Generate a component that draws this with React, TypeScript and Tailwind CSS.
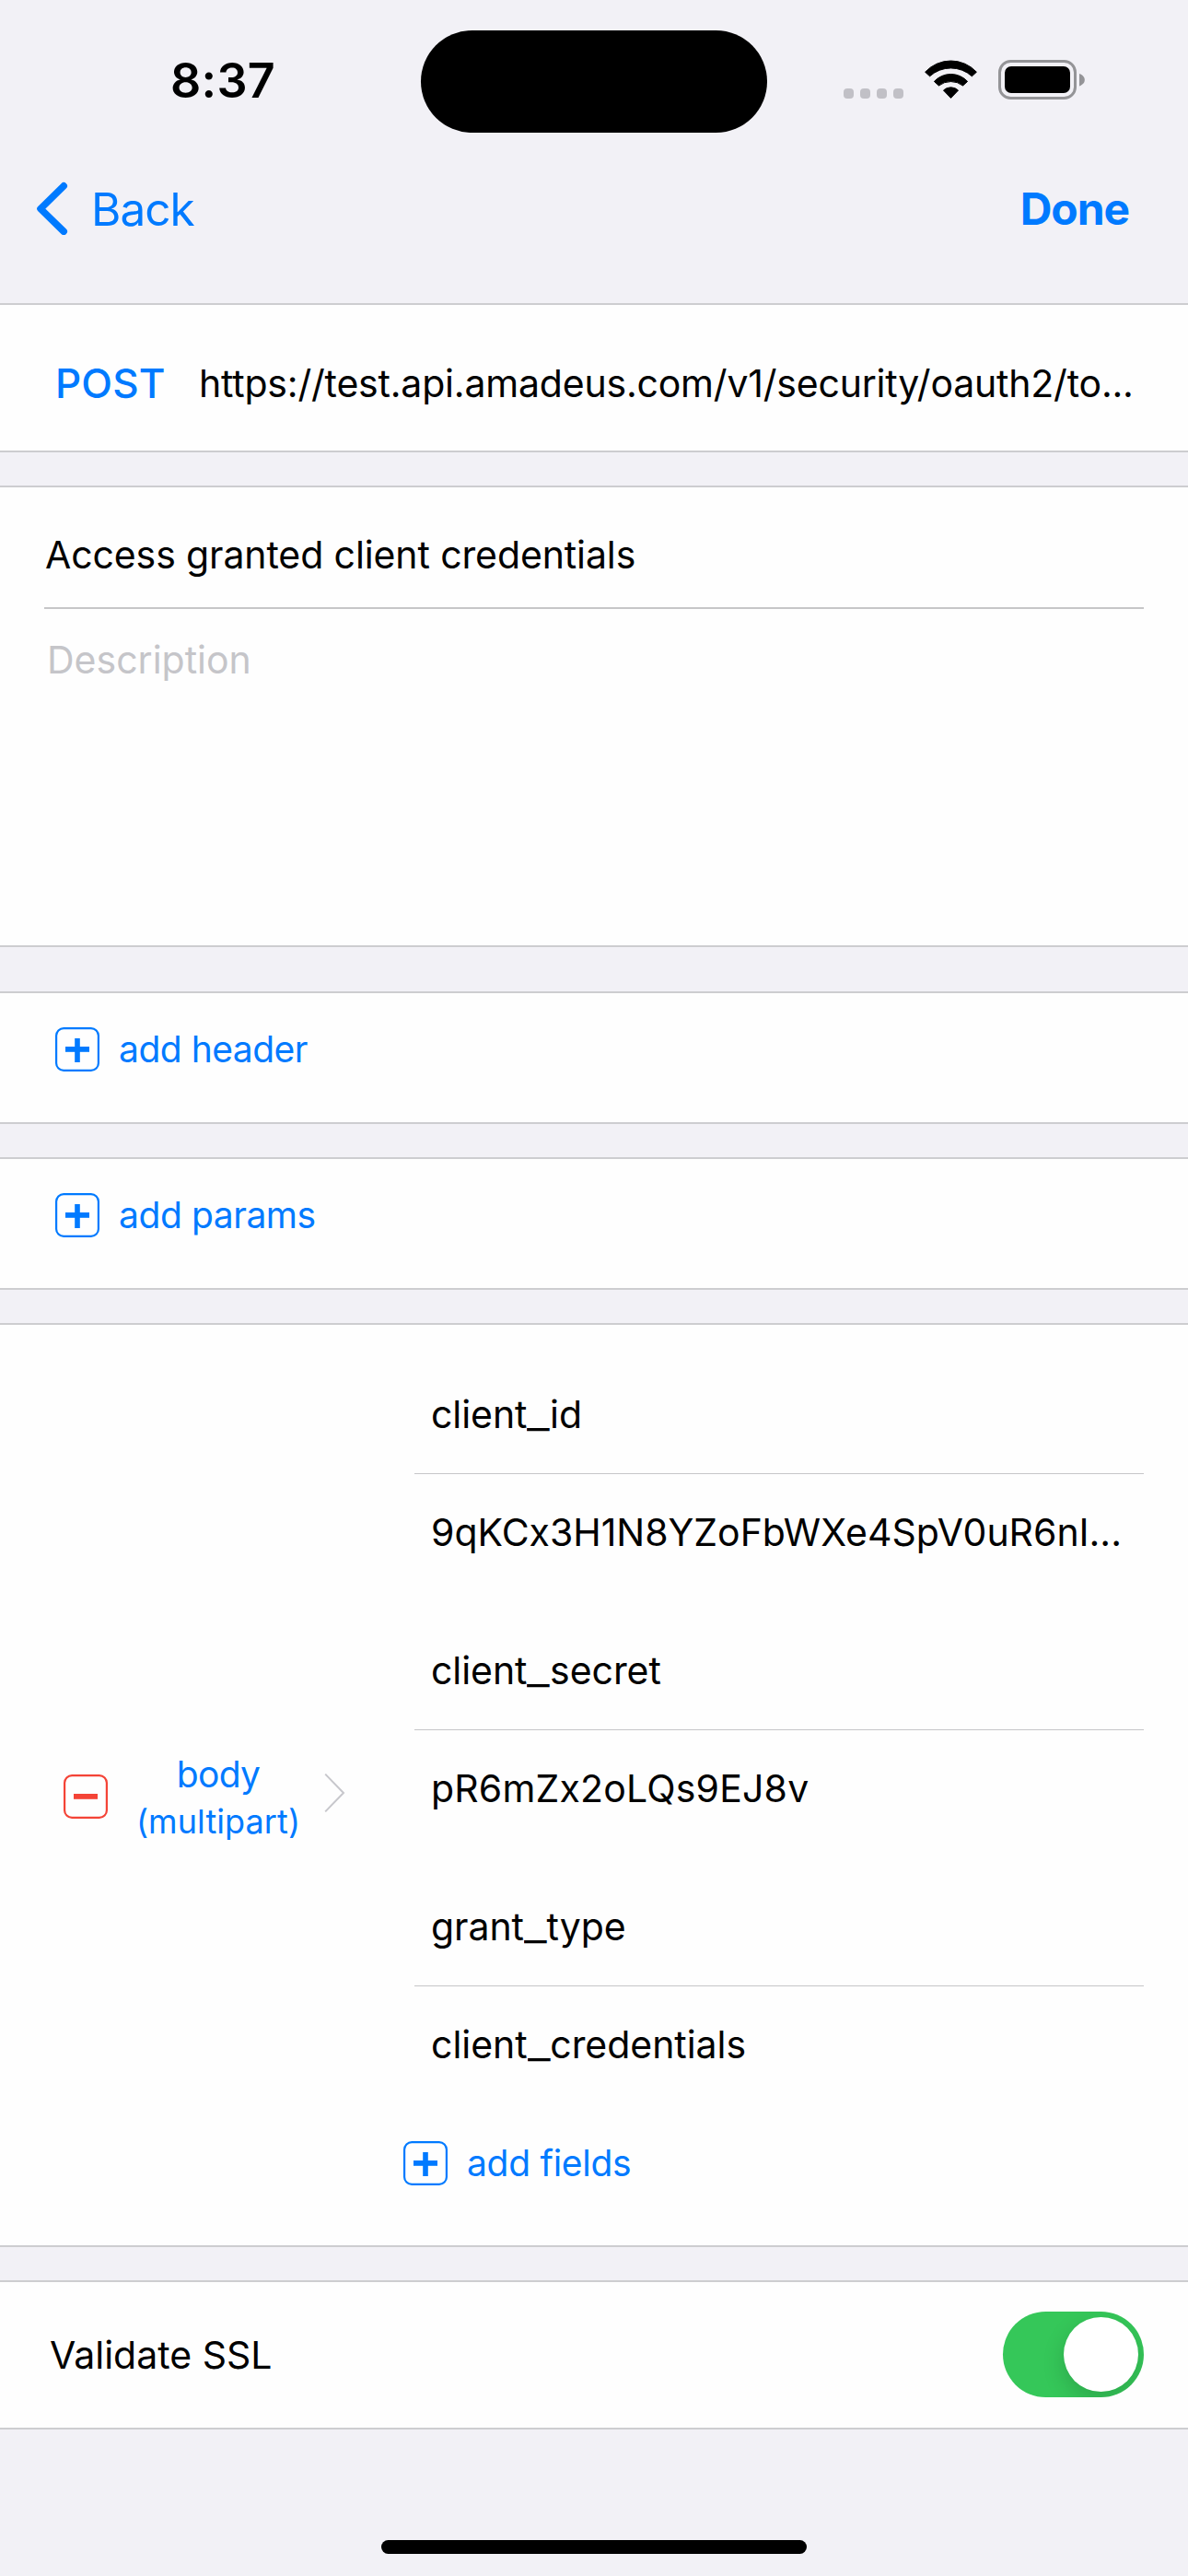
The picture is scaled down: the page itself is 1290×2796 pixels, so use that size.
import { Fragment, type ReactNode } from "react";

function Wifi() {
  return (
    <svg width="59" height="44" viewBox="-1 -1 59 44" className="mt-16 ml-[76px]" fill="#000" stroke="#000" strokeWidth="1" strokeLinejoin="round">
      <path d="M0.6 13.2 A38 38 0 0 1 56.4 13.2 L51.4 17.8 A34 34 0 0 0 5.6 17.8 Z" />
      <path d="M10.4 23.4 A24.6 24.6 0 0 1 46.6 23.4 L41.6 28 A21.5 21.5 0 0 0 15.4 28 Z" />
      <path d="M20.5 33.1 A11.4 11.4 0 0 1 36.5 33.1 L28.5 41.4 Z" />
    </svg>
  );
}

function Battery() {
  return (
    <svg width="95" height="43" viewBox="0 0 95 43" className="mt-[65px] ml-[22px]">
      <rect x="1.5" y="1.5" width="82" height="40" rx="12" fill="none" stroke="#949497" strokeWidth="3" />
      <rect x="7" y="7" width="71" height="29" rx="7" fill="#000" />
      <path d="M88 15 C91.4 16.2 93.8 18.6 93.8 21.7 C93.8 24.8 91.4 27.2 88 28.4 Z" fill="#949497" />
    </svg>
  );
}

function BoxIcon({ kind }: { kind: "plus" | "minus" }) {
  return (
    <svg width="48" height="48" viewBox="0 0 48 48" className={kind === "plus" ? "shrink-0 text-[#007aff]" : "shrink-0 text-[#f44336]"}>
      <rect x="1.1" y="1.1" width="45.8" height="45.8" rx="8" fill="none" stroke="currentColor" strokeWidth="2.2" />
      <rect x="11" y="21" width="26" height="5.8" fill="currentColor" />
      {kind === "plus" && <rect x="21.2" y="12" width="5.6" height="26" fill="currentColor" />}
    </svg>
  );
}

function Section({ className, children }: { className: string; children: ReactNode }) {
  return <section className={`box-border shrink-0 border-y-2 border-[#cdcdd0] bg-[#fefefe] ${className}`}>{children}</section>;
}

function AddButton({ label, className }: { label: string; className: string }) {
  return (
    <button className={`flex items-center gap-[21px] text-[39px] leading-[48px] whitespace-pre text-[#007aff] ${className}`}>
      <BoxIcon kind="plus" />
      <span>{label}</span>
    </button>
  );
}

// Field names are drawn with a widened underscore.
function FieldName({ text }: { text: string }) {
  const parts = text.split("_");
  return (
    <>
      {parts.map((part, i) => (
        <Fragment key={i}>
          {i > 0 && <span className="mr-[6px] inline-block origin-left scale-x-[1.32]">_</span>}
          {part}
        </Fragment>
      ))}
    </>
  );
}

const fields = [
  { name: "client_id", value: "9qKCx3H1N8YZoFbWXe4SpV0uR6nI...", spacing: "tracking-[-0.02px]" },
  { name: "client_secret", value: "pR6mZx2oLQs9EJ8v", spacing: "tracking-[0.18px]" },
  { name: "grant_type", value: "client_credentials", spacing: "tracking-[-0.04px]" },
];

export default function App() {
  return (
    <div className="flex h-[2796px] w-[1290px] flex-col overflow-hidden bg-[#f2f1f6] font-['Inter','Liberation_Sans',sans-serif] text-black">
      <div className="flex h-[197px] shrink-0 items-start">
        <div className="mt-[58px] ml-[185px] w-[272px] text-[52px] leading-[60px] font-semibold tracking-[0.3px]">8:37</div>
        <div className="mt-[33.4px] h-[111px] w-[376px] rounded-full bg-black" />
        <div className="mt-24 ml-[83px] flex w-[11px] gap-[7px]">
          {[0, 1, 2, 3].map((i) => (
            <span key={i} className="size-[11px] shrink-0 rounded-[4px] bg-[#c1c0c6]" />
          ))}
        </div>
        <Wifi />
        <Battery />
      </div>

      <div className="flex h-[132px] shrink-0 items-start justify-between pr-[64px] pl-[39px] text-[#007aff]">
        <button className="flex">
          <svg width="35" height="58" viewBox="0 0 35 58" fill="none" stroke="currentColor" strokeWidth="7.6" strokeLinecap="round" strokeLinejoin="round">
            <path d="M30.2 4.9 L5 29.6 L30.2 54.3" />
          </svg>
          <span className="ml-[25px] text-[49.5px] leading-[60px] tracking-[-0.954px]">Back</span>
        </button>
        <button className="text-[48px] leading-[60px] font-bold tracking-[-1.061px]">Done</button>
      </div>

      <Section className="flex h-[162px] items-start">
        <span className="mt-[58px] ml-[60px] w-[156px] text-[44px] leading-[54px] font-medium tracking-[0.105px] text-[#007aff]">POST</span>
        <span className="mt-[60px] text-[41px] leading-[50px] tracking-[-0.2px] whitespace-nowrap">
          https://test.api.amadeus.com/v1/security/oauth2/to...
        </span>
      </Section>

      <Section className="mt-9 h-[501px] px-12 pt-12 text-[41px] leading-[50px]">
        <div className="h-[82px] pl-px tracking-[-0.11px]">Access granted client credentials</div>
        <div className="h-[2px] bg-[#c6c6c8]" />
        <div className="mt-[30px] pl-[3px] text-[#c5c5c9]">Description</div>
      </Section>

      <Section className="mt-12 h-36 pt-[37px] pl-[60px]">
        <AddButton label="add header" className="tracking-[-0.5px]" />
      </Section>

      <Section className="mt-9 h-36 pt-[37px] pl-[60px]">
        <AddButton label="add params" className="tracking-[-0.437px]" />
      </Section>

      <Section className="mt-9 flex h-[1003px] items-start">
        <div className="mt-[464px] flex w-[438px] items-start pl-[69px]">
          <div className="mt-6">
            <BoxIcon kind="minus" />
          </div>
          <div className="ml-[31px] flex w-[178px] flex-col items-center gap-[3px] leading-[48px] text-[#007aff]">
            <span className="text-[39px] tracking-[-0.678px]">body</span>
            <span className="text-[36px] tracking-[0.08px]">(multipart)</span>
          </div>
          <svg width="24" height="44" viewBox="0 0 24 44" className="mt-[22px] ml-[26px]" fill="none" stroke="#c7c7cc" strokeWidth="2">
            <path d="M1.2 1.6 L21 22 L1.2 42.4" />
          </svg>
        </div>
        <div className="flex w-[804px] flex-col pt-[72px]">
          <div className="ml-3 flex flex-col gap-[100px] text-[41px] leading-[50px] whitespace-nowrap">
            {fields.map((field) => (
              <div key={field.name} className="h-[178px]">
                <div className="h-[89px] pl-[18px] tracking-[-0.06px]">
                  <FieldName text={field.name} />
                </div>
                <div className="h-px bg-[#c6c6c8]" />
                <div className={`mt-[38px] pl-[18px] ${field.spacing}`}>
                  <FieldName text={field.value} />
                </div>
              </div>
            ))}
          </div>
          <AddButton label="add fields" className="mt-20 tracking-[-0.286px]" />
        </div>
      </Section>

      <Section className="mt-9 flex h-[162px] items-start justify-between pr-12 pl-[54px]">
        <span className="mt-[54px] text-[41px] leading-[50px]">Validate SSL</span>
        <button className="mt-8 flex h-[93px] w-[153px] items-center justify-end overflow-hidden rounded-full bg-[#35c759] pr-[6px]">
          <span className="size-[81px] rounded-full bg-white shadow-[0_9px_24px_rgba(0,0,0,0.16)]" />
        </button>
      </Section>

      <div className="mx-auto mt-[120px] h-[15px] w-[462px] shrink-0 rounded-full bg-black" />
    </div>
  );
}
